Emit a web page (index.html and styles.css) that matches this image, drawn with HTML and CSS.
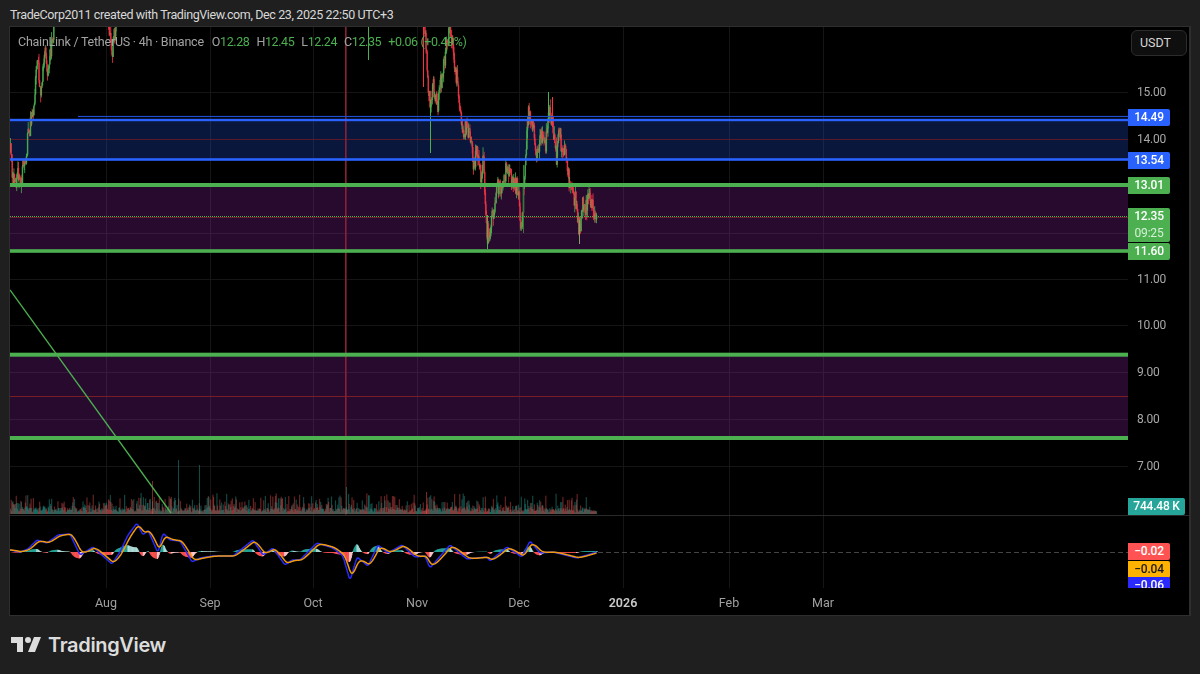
FILE: index.html
```html
<!DOCTYPE html>
<html lang="en">

<head>
    <meta charset="UTF-8">
    <title>LINKUSDT chart snapshot</title>
    <link rel="stylesheet" href="styles.css">
</head>

<body>
    <div class="snapshot-title">TradeCorp2011 created with TradingView.com, Dec 23, 2025 22:50 UTC+3</div>

    <div class="chart-frame">
        <canvas id="chart" width="1179" height="588"></canvas>

        <div class="legend">
            <span class="legend-name">ChainLink / TetherUS · 4h · Binance</span>
            <span class="ohlc">O<b>12.28</b></span>
            <span class="ohlc">H<b>12.45</b></span>
            <span class="ohlc">L<b>12.24</b></span>
            <span class="ohlc">C<b>12.35</b></span>
            <span class="ohlc"><b>+0.06 (+0.49%)</b></span>
        </div>

        <div class="currency-btn">USDT</div>

        <!-- top = distance from the frame, taken from the price scale -->
        <div class="price-scale">
            <span class="price" style="top:56px">15.00</span>
            <span class="price" style="top:103px">14.00</span>
            <span class="price" style="top:243px">11.00</span>
            <span class="price" style="top:289px">10.00</span>
            <span class="price" style="top:336px">9.00</span>
            <span class="price" style="top:383px">8.00</span>
            <span class="price" style="top:430px">7.00</span>

            <span class="tag tag-blue" style="top:82px">14.49</span>
            <span class="tag tag-blue" style="top:125px">13.54</span>
            <span class="tag tag-green" style="top:150px">13.01</span>
            <span class="tag tag-green tag-last" style="top:181px">12.35<small>09:25</small></span>
            <span class="tag tag-green" style="top:216px">11.60</span>
            <span class="tag tag-volume" style="top:471px">744.48 K</span>
        </div>

        <div class="macd-scale">
            <span class="tag tag-red" style="top:27px">−0.02</span>
            <span class="tag tag-orange" style="top:45px">−0.04</span>
            <span class="tag tag-indigo" style="top:61px">−0.06</span>
        </div>

        <div class="time-scale">
            <span class="month" style="left:86px">Aug</span>
            <span class="month" style="left:190px">Sep</span>
            <span class="month" style="left:293px">Oct</span>
            <span class="month" style="left:397px">Nov</span>
            <span class="month" style="left:499px">Dec</span>
            <span class="month month-year" style="left:603px">2026</span>
            <span class="month" style="left:709px">Feb</span>
            <span class="month" style="left:803px">Mar</span>
        </div>
    </div>

    <div class="watermark">
        <svg class="tv-logo" viewBox="0 0 36 28" width="36" height="28">
            <path fill="currentColor" d="M14 6H2v6h6v9h6V6Zm12 15h-7l6-15h7l-6 15Zm-7-9a3 3 0 1 0 0-6 3 3 0 0 0 0 6Z" />
        </svg>
        <span class="tv-name">TradingView</span>
    </div>

    <script src="chart.js"></script>
</body>

</html>
```

FILE: styles.css
```css
body {
    margin: 0;
    height: 674px;
    overflow: hidden;
    background-color: #1f1f1f;
    font-family: 'Roboto', sans-serif;
    display: flex;
    flex-direction: column;
}

.snapshot-title {
    height: 26px;
    line-height: 30px;
    padding-left: 10px;
    font-size: 12.5px;
    letter-spacing: -0.38px;
    color: #d8d8d8;
    white-space: nowrap;
}

.chart-frame {
    position: relative;
    width: 1179px;
    height: 588px;
    margin-left: 9px;
    border: 1px solid #2e2e2e;
    border-right-width: 2px;
    background-color: #000;
    overflow: hidden;
}

#chart {
    display: block;
}

.legend {
    position: absolute;
    top: 6px;
    left: 8px;
    display: flex;
    gap: 7px;
    font-size: 12.5px;
    letter-spacing: -0.24px;
    line-height: 18px;
    color: #a3a3a3;
    white-space: nowrap;
}

.legend-name {
    margin-right: 1px;
}

.ohlc {
    letter-spacing: -0.4px;
}

.legend b {
    font-weight: 400;
    color: #4caf50;
}

.currency-btn {
    position: absolute;
    top: 3px;
    left: 1121px;
    width: 46px;
    height: 24px;
    padding-left: 8px;
    border: 1px solid #2c2c2c;
    border-radius: 6px;
    background-color: #0f0f0f;
    color: #d6d6d6;
    font-size: 12.5px;
    line-height: 24px;
}

.price-scale,
.macd-scale {
    position: absolute;
    left: 1118px;
    width: 60px;
    font-size: 12px;
    letter-spacing: -0.2px;
}

.price-scale {
    top: 0;
    height: 488px;
}

.macd-scale {
    top: 489px;
    height: 72px;
    overflow: hidden;
}

.price {
    position: absolute;
    left: 9px;
    line-height: 18px;
    color: #a8a8a8;
}

.tag {
    position: absolute;
    left: 0;
    width: 42px;
    height: 17px;
    line-height: 17px;
    text-align: center;
    color: #fff;
    font-weight: 500;
    border-radius: 0 2px 2px 0;
}

.tag small {
    display: block;
    font-size: 12px;
    font-weight: 400;
    color: #d6f0d7;
}

.tag-blue {
    background-color: #2962ff;
}

.tag-green {
    background-color: #4caf50;
}

.tag-last {
    height: 34px;
}

.tag-volume {
    width: 57px;
    background-color: #26a69a;
}

.tag-red {
    background-color: #ff5252;
}

.tag-orange {
    background-color: #ffb300;
    color: #1a1a1a;
}

.tag-indigo {
    background-color: #2a2aff;
}

.time-scale {
    position: absolute;
    top: 561px;
    left: 0;
    width: 1118px;
    height: 27px;
    font-size: 12.5px;
    line-height: 30px;
    color: #a0a0a0;
}

.month {
    position: absolute;
    width: 20px;
    display: flex;
    justify-content: center;
}

.month-year {
    font-weight: 600;
    color: #c8c8c8;
}

.watermark {
    flex: 1;
    display: flex;
    align-items: center;
    gap: 3px;
    padding-left: 9px;
    color: #dcdcdc;
}

.tv-name {
    font-family: 'Inter', sans-serif;
    font-size: 20px;
    font-weight: 600;
    letter-spacing: -0.35px;
}
```

FILE: chart.js
```js
const canvas = document.getElementById('chart');
const ctx = canvas.getContext('2d');
// page coords are easier to read off the screenshot
ctx.translate(-10, -27);

const RIGHT = 1128;
const PANE_Y = 515;
const STEP = 0.57;

let seed = 2011;
function rnd() {
    seed = (seed * 1664525 + 1013904223) % 4294967296;
    return seed / 4294967296;
}

function interp(points, x) {
    for (let i = 1; i < points.length; i++) {
        if (x <= points[i][0]) {
            const a = points[i - 1];
            const b = points[i];
            return a[1] + (b[1] - a[1]) * (x - a[0]) / (b[0] - a[0]);
        }
    }
    return points[points.length - 1][1];
}

function hline(y, color, width, x0 = 10) {
    ctx.fillStyle = color;
    ctx.fillRect(x0, y - width / 2, RIGHT - x0, width);
}

// grid
ctx.fillStyle = '#151515';
[92, 139, 185.5, 232.5, 279, 325, 372, 419, 466].forEach(y => ctx.fillRect(10, Math.round(y), RIGHT - 10, 1));
[106, 210, 313, 417, 519, 623, 729, 823].forEach(x => ctx.fillRect(x, 27, 1, 561));

// zones
ctx.fillStyle = 'rgba(41, 98, 255, 0.24)';
ctx.fillRect(10, 120, RIGHT - 10, 40);
ctx.fillStyle = 'rgba(156, 39, 176, 0.26)';
ctx.fillRect(10, 185, RIGHT - 10, 66);
ctx.fillRect(10, 355, RIGHT - 10, 83);
hline(139.5, '#5a1a2c', 1);
hline(217.5, '#6e1b2b', 1);
hline(396.5, '#7a1c26', 1);

// vertical marker
ctx.fillStyle = '#8a2036';
ctx.fillRect(345, 27, 1.6, 411);
ctx.fillStyle = '#3c1512';
ctx.fillRect(345, 438, 1.6, 77);

// candles follow a hand-read close path, negative y is off the top
const closePath = [
    [10, 152], [12, 175], [14, 186], [17, 176], [21, 182], [23, 160], [25, 172], [27, 140], [30, 125],
    [33, 112], [36, 70], [38, 62], [40, 100], [43, 66], [45, 50], [47, 84], [49, 60], [52, 36], [56, 10],
    [62, -40], [100, -30], [107, 10], [112, 58], [115, 22], [120, -20], [360, -60], [367, 5], [369, 5],
    [375, -40], [410, -30], [414, 12], [420, -10], [425, 30], [427, 78], [430, 105], [433, 85], [437, 110],
    [440, 85], [444, 60], [447, 40], [450, 28], [454, 60], [459, 100], [462, 128], [466, 130], [470, 140],
    [473, 165], [477, 150], [480, 175], [483, 160], [485, 205], [487, 238], [490, 225], [493, 215],
    [497, 185], [500, 192], [504, 178], [507, 165], [511, 178], [515, 185], [518, 188], [520, 226],
    [522, 215], [524, 170], [527, 125], [529, 108], [532, 125], [535, 145], [537, 160], [540, 140],
    [543, 135], [545, 150], [548, 112], [551, 115], [553, 130], [556, 158], [558, 135], [562, 150],
    [564, 152], [567, 165], [569, 186], [572, 192], [575, 200], [578, 225], [580, 232], [582, 205],
    [586, 208], [589, 195], [592, 206], [596, 218]
];

const GREEN = '#4caf50';
const RED = '#f23645';
const candles = [];
let prev = closePath[0][1];
for (let x = 10; x < 596.5; x += STEP) {
    const close = interp(closePath, x) + (rnd() - 0.5) * 18;
    const up = close < prev;
    const top = Math.min(prev, close);
    const bottom = Math.max(prev, close);
    candles.push({
        x,
        up,
        top,
        bottom,
        wickTop: top - rnd() * rnd() * 10,
        wickBottom: bottom + rnd() * rnd() * 10
    });
    prev = close;
}

candles.forEach(c => {
    ctx.fillStyle = c.up ? GREEN : RED;
    ctx.fillRect(c.x + 0.1, c.wickTop, 0.8, c.wickBottom - c.wickTop);
    ctx.globalAlpha = 0.75;
    ctx.fillRect(c.x - 0.3, c.top, 1.6, Math.max(c.bottom - c.top, 0.5));
    ctx.globalAlpha = 1;
});
// single long wicks which the noise doesn't give
ctx.fillStyle = GREEN;
ctx.fillRect(368, 27, 1, 33);
ctx.fillRect(430, 100, 1, 53);
ctx.fillRect(548, 92, 1, 30);
ctx.fillRect(487, 215, 1, 34);
ctx.fillStyle = '#2f7d35';
ctx.fillRect(523, 165, 1, 68);
ctx.fillStyle = '#7fa06a';
ctx.fillRect(579, 220, 1, 24);
ctx.fillStyle = RED;
ctx.fillRect(552, 97, 1, 30);
ctx.fillRect(423, 27, 1, 60);

// levels on top of the candles
hline(120, '#2962ff', 2.4);
hline(159.5, '#2962ff', 2.6);
hline(116.5, '#1f4fd0', 1.2, 78);
hline(185, '#4caf50', 4);
hline(251, '#4caf50', 3.6);
hline(354.7, '#4caf50', 4);
hline(438, '#4caf50', 4);

// last price line
ctx.fillStyle = '#4caf50';
for (let x = 10; x < RIGHT; x += 2) ctx.fillRect(x, 216, 1, 1);

// volume
candles.forEach(c => {
    let h = 1.5 + rnd() * 4.5 + Math.pow(rnd(), 4) * 16;
    if (c.x > 590) h = 2 + rnd() * 2;
    ctx.fillStyle = c.up ? 'rgba(38, 166, 154, 0.42)' : 'rgba(239, 83, 80, 0.42)';
    ctx.fillRect(c.x, 514 - h, 1.2, h);
});
ctx.fillStyle = 'rgba(38, 166, 154, 0.45)';
ctx.fillRect(178, 460, 1, 54);
ctx.fillRect(199, 465, 1, 49);
ctx.fillRect(346, 487, 1, 27);
ctx.fillStyle = 'rgba(239, 83, 80, 0.5)';
ctx.fillRect(152, 481, 1, 33);
ctx.fillRect(426, 492, 1, 22);

// trend line
ctx.strokeStyle = '#4caf50';
ctx.lineWidth = 1.3;
ctx.beginPath();
ctx.moveTo(10, 290);
ctx.lineTo(171, 513);
ctx.stroke();

// pane divider
ctx.fillStyle = '#2a2a2a';
ctx.fillRect(10, PANE_Y, 1179, 1);

// macd
const macdPath = [
    [10, 550], [20, 552], [28, 549], [37, 540], [47, 543], [58, 535], [70, 534], [80, 555], [93, 547],
    [103, 556], [112, 564], [120, 552], [128, 535], [137, 523], [143, 535], [148, 530], [158, 553],
    [163, 533], [170, 540], [180, 541], [192, 562], [200, 558], [213, 556], [233, 556], [253, 540],
    [263, 555], [273, 548], [285, 565], [292, 560], [300, 560], [317, 543], [333, 548], [343, 556],
    [350, 581], [357, 557], [368, 566], [378, 545], [388, 553], [402, 545], [415, 557], [425, 556],
    [430, 568], [450, 545], [467, 559], [487, 557], [490, 561], [507, 547], [522, 557], [530, 541],
    [540, 553], [553, 552], [577, 558], [597, 552]
];

const macd = [];
const signal = [];
let ema = 550;
for (let x = 10; x < 597; x += STEP) {
    const y = (interp(macdPath, x - 1) + interp(macdPath, x) + interp(macdPath, x + 1)) / 3;
    ema += (y - ema) * 0.16;
    macd.push([x, y]);
    signal.push([x, ema]);
}

let lastDiff = 0;
macd.forEach((p, i) => {
    const diff = (signal[i][1] - p[1]) * 1.1;
    const rising = Math.abs(diff) > Math.abs(lastDiff);
    if (diff > 0) ctx.fillStyle = rising ? '#26a69a' : '#b2dfdb';
    else ctx.fillStyle = rising ? '#ff5252' : '#ffcdd2';
    ctx.fillRect(p[0], diff > 0 ? 552 - diff : 552, 1, Math.abs(diff));
    lastDiff = diff;
});

function polyline(points, color) {
    ctx.strokeStyle = color;
    ctx.lineWidth = 1.5;
    ctx.beginPath();
    points.forEach((p, i) => (i ? ctx.lineTo(p[0], p[1]) : ctx.moveTo(p[0], p[1])));
    ctx.stroke();
}
polyline(macd, '#2a2af5');
polyline(signal, '#f09a10');

// zero line after the last bar
ctx.fillStyle = '#444';
for (let x = 598; x < RIGHT; x += 8) ctx.fillRect(x, 552, 5, 1);
```
